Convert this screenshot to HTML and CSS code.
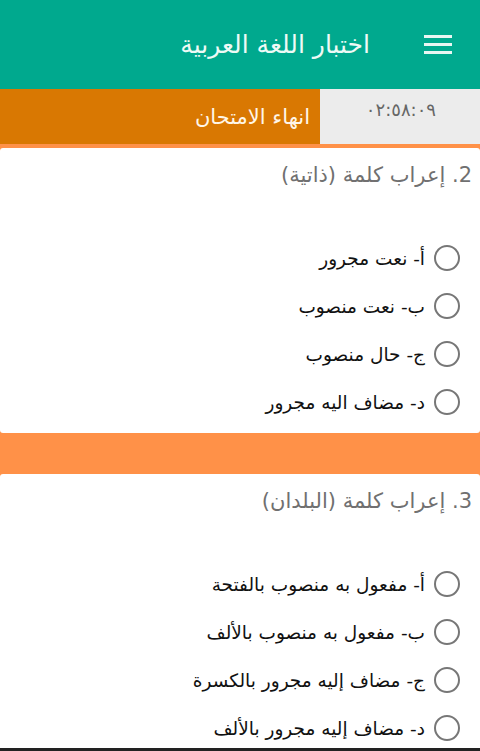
FILE: index.html
```html
<!DOCTYPE html>
<html lang="ar" dir="rtl">
<head>
    <meta charset="UTF-8">
    <meta name="viewport" content="width=device-width, initial-scale=1.0">
    <title>اختبار اللغة العربية</title>
    <link rel="stylesheet" href="styles.css">
</head>
<body>

    <header class="topbar">
        <div class="menu-icon">
            <span></span><span></span><span></span>
        </div>
        <h1>اختبار اللغة العربية</h1>
    </header>

    <div class="timer-row">
        <div class="timer">٠٢:٥٨:٠٩</div>
        <button class="btn-end">انهاء الامتحان</button>
    </div>

    <main class="questions">
        <section class="card">
            <h2 class="question">2. إعراب كلمة (ذاتية)</h2>
            <ul class="options">
                <li><span class="radio"></span>أ- نعت مجرور</li>
                <li><span class="radio"></span>ب- نعت منصوب</li>
                <li><span class="radio"></span>ج- حال منصوب</li>
                <li><span class="radio"></span>د- مضاف اليه مجرور</li>
            </ul>
        </section>

        <section class="card card-last">
            <h2 class="question">3. إعراب كلمة (البلدان)</h2>
            <ul class="options">
                <li><span class="radio"></span>أ- مفعول به منصوب بالفتحة</li>
                <li><span class="radio"></span>ب- مفعول به منصوب بالألف</li>
                <li><span class="radio"></span>ج- مضاف إليه مجرور بالكسرة</li>
                <li><span class="radio"></span>د- مضاف إليه مجرور بالألف</li>
            </ul>
        </section>
    </main>

</body>
</html>
```

FILE: styles.css
```css
body {
    font-family: 'DejaVu Sans', 'Noto Sans', sans-serif;
    margin: 0;
    padding: 0;
    background-color: #ff9148;
    height: 751px;
    overflow: hidden;
    border-bottom: 3px solid #222;
    box-sizing: border-box;
}

.topbar {
    height: 89px;
    background-color: #00a98e;
    display: flex;
    align-items: center;
    padding-right: 28px;
    gap: 54px;
    box-sizing: border-box;
}

.menu-icon {
    display: flex;
    flex-direction: column;
    gap: 5px;
    width: 28px;
}

.menu-icon span {
    display: block;
    height: 3px;
    background-color: #e8f7f3;
}

.topbar h1 {
    margin: 0;
    font-size: 25px;
    font-weight: normal;
    color: #eefaf6;
}

.timer-row {
    display: flex;
    height: 55px;
}

.timer {
    width: 160px;
    background-color: #ececec;
    color: #666;
    font-size: 18px;
    padding-top: 10px;
    padding-right: 44px;
    box-sizing: border-box;
}

.btn-end {
    flex: 1;
    background-color: #d97802;
    color: #fff6e8;
    border: none;
    font-family: inherit;
    font-size: 21px;
    text-align: right;
    padding: 0 10px 0 0;
}

.questions {
    padding-top: 4px;
}

.card {
    background-color: #fff;
    border-radius: 3px;
    height: 285px;
    padding: 15px 8px 0 0;
    box-sizing: border-box;
    margin-bottom: 41px;
}

.card-last {
    height: 280px;
    margin-bottom: 0;
}

.question {
    margin: 0;
    font-size: 21px;
    font-weight: normal;
    color: #707070;
}

.options {
    list-style: none;
    margin: 47px 0 0 0;
    padding: 0 12px 0 0;
}

.options li {
    display: flex;
    align-items: center;
    gap: 9px;
    height: 48px;
    font-size: 18.5px;
    color: #111;
}

.radio {
    width: 26px;
    height: 26px;
    border: 2px solid #777;
    border-radius: 50%;
    box-sizing: border-box;
}
```
